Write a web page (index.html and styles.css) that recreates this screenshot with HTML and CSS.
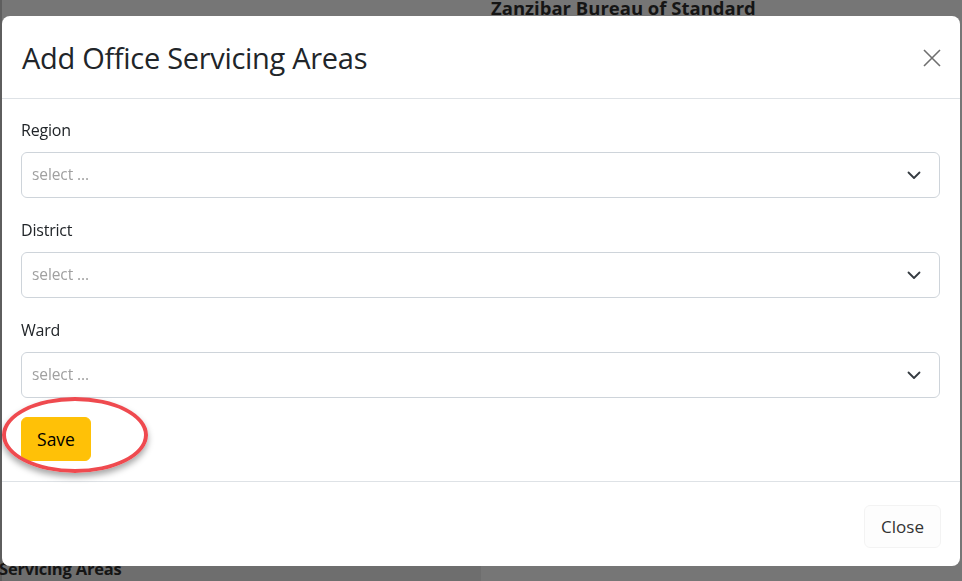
FILE: index.html
```html
<!DOCTYPE html>
<html lang="en">
<head>
<meta charset="utf-8">
<title>Add Office Servicing Areas</title>
<link rel="stylesheet" href="styles.css">
</head>
<body>
<div class="page">
  <div class="page-top">
    <h2 class="org">Zanzibar Bureau of Standard</h2>
  </div>
  <div class="page-main">
    <div class="page-left"><h3 class="page-sub">Servicing Areas</h3></div>
    <div class="page-right"></div>
  </div>
</div>

<div class="modal">
  <div class="modal-header">
    <h1 class="modal-title">Add Office Servicing Areas</h1>
    <button class="btn-close" aria-label="Close">
      <svg width="18" height="18" viewBox="0 0 18 18"><path d="M1 1L17 17M17 1L1 17" stroke="#6f6f6f" stroke-width="1.6" fill="none"/></svg>
    </button>
  </div>
  <div class="modal-body">
    <div class="group">
      <label class="label">Region</label>
      <div class="select"><span class="placeholder">select ...</span><svg class="chev" width="14" height="10" viewBox="0 0 14 10"><path d="M1.5 2.5l5.5 5.5 5.5-5.5" stroke="#343a40" stroke-width="1.8" fill="none" stroke-linecap="round" stroke-linejoin="round"/></svg></div>
    </div>
    <div class="group">
      <label class="label">District</label>
      <div class="select"><span class="placeholder">select ...</span><svg class="chev" width="14" height="10" viewBox="0 0 14 10"><path d="M1.5 2.5l5.5 5.5 5.5-5.5" stroke="#343a40" stroke-width="1.8" fill="none" stroke-linecap="round" stroke-linejoin="round"/></svg></div>
    </div>
    <div class="group">
      <label class="label">Ward</label>
      <div class="select"><span class="placeholder">select ...</span><svg class="chev" width="14" height="10" viewBox="0 0 14 10"><path d="M1.5 2.5l5.5 5.5 5.5-5.5" stroke="#343a40" stroke-width="1.8" fill="none" stroke-linecap="round" stroke-linejoin="round"/></svg></div>
    </div>
    <button class="btn-save">Save</button>
  </div>
  <div class="modal-footer">
    <button class="btn-close-text">Close</button>
  </div>
  <div class="annot"></div>
</div>
</body>
</html>
```

FILE: styles.css
```css
html, body {
  margin: 0;
  padding: 0;
  height: 100%;
  overflow: hidden;
}
body {
  font-family: "Open Sans", "Noto Sans", sans-serif;
  background: #767676;
}
.page {
  height: 581px;
  display: flex;
  flex-direction: column;
  border-left: 2px solid #5e5e5e;
}
.page-top {
  height: 40px;
  display: flex;
  padding-left: 489px;
}
.org {
  margin: -2px 0 0 0;
  font-size: 18.5px;
  font-weight: 700;
  color: #151515;
  line-height: 20px;
  letter-spacing: 0;
}
.page-main {
  flex: 1;
  display: flex;
}
.page-left {
  width: 479px;
  background: #6e6e6e;
  display: flex;
  align-items: flex-end;
}
.page-right {
  flex: 1;
  background: #767676;
}
.page-sub {
  margin: 0 0 2px -3px;
  font-size: 16.5px;
  font-weight: 700;
  color: #151515;
  line-height: 20px;
  letter-spacing: -0.2px;
}
.modal {
  position: fixed;
  left: 2px;
  top: 16px;
  width: 958px;
  height: 550px;
  background: #fff;
  border-radius: 8px;
  display: flex;
  flex-direction: column;
  color: #212529;
}
.modal-header {
  height: 83px;
  box-sizing: border-box;
  border-bottom: 1px solid #dee2e6;
  display: flex;
  align-items: center;
  justify-content: space-between;
  padding: 2px 19px 0 20px;
}
.modal-title {
  margin: 0;
  font-size: 29px;
  font-weight: 500;
  letter-spacing: -0.3px;
  line-height: 36px;
}
.btn-close {
  border: 0;
  background: transparent;
  padding: 0;
  width: 18px;
  height: 18px;
  display: flex;
}
.modal-body {
  flex: 1;
  padding: 19px 20px 0 19px;
  display: flex;
  flex-direction: column;
  align-items: flex-start;
}
.group {
  align-self: stretch;
  display: flex;
  flex-direction: column;
  margin-bottom: 20px;
}
.label {
  font-size: 16px;
  line-height: 24px;
  margin-bottom: 10px;
  letter-spacing: -0.2px;
}
.select {
  height: 46px;
  box-sizing: border-box;
  border: 1px solid #ced4da;
  border-radius: 6px;
  display: flex;
  align-items: center;
  justify-content: space-between;
  padding: 0 18px 0 10px;
}
.placeholder {
  color: #a0a0a0;
  font-size: 15.5px;
  letter-spacing: -0.1px;
  margin-top: -2px;
}
.chev {
  display: block;
}
.btn-save {
  font-family: inherit;
  background: #ffc107;
  border: 1px solid #ffc107;
  border-radius: 6px;
  width: 70px;
  height: 44px;
  font-size: 17.5px;
  color: #000;
  padding: 0;
  margin-top: -1px;
}
.modal-footer {
  height: 85px;
  box-sizing: border-box;
  border-top: 1px solid #dee2e6;
  display: flex;
  align-items: center;
  justify-content: flex-end;
  padding: 5px 19px 0 0;
}
.btn-close-text {
  font-family: inherit;
  background: #fdfdfd;
  border: 1px solid #f3f3f3;
  border-radius: 6px;
  width: 77px;
  height: 43px;
  font-size: 17px;
  color: #333;
  padding: 0;
}
.annot {
  position: absolute;
  left: 0;
  top: 381px;
  width: 146px;
  height: 76px;
  box-sizing: border-box;
  border: 4px solid #ef4a4f;
  border-radius: 50%;
  box-shadow: 0 4px 6px rgba(0, 0, 0, 0.35);
  pointer-events: none;
}
```
